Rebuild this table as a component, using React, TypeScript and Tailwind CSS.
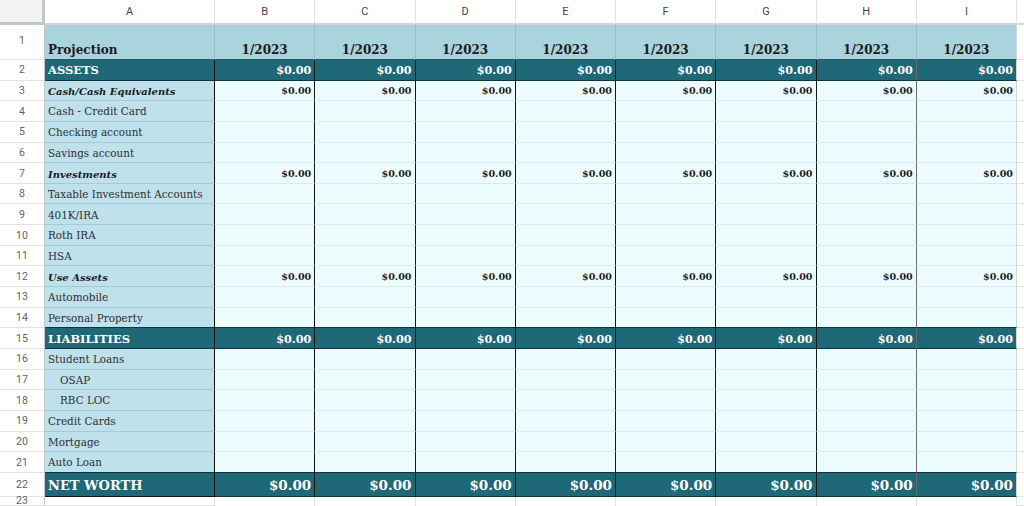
import React from 'react'

type Kind = 'head' | 'dark' | 'sub' | 'item' | 'indent' | 'total' | 'blank'

type Row = {
  n: number
  label: string
  kind: Kind
  values?: boolean
}

const rows: Row[] = [
  { n: 1, label: 'Projection', kind: 'head' },
  { n: 2, label: 'ASSETS', kind: 'dark', values: true },
  { n: 3, label: 'Cash/Cash Equivalents', kind: 'sub', values: true },
  { n: 4, label: 'Cash - Credit Card', kind: 'item' },
  { n: 5, label: 'Checking account', kind: 'item' },
  { n: 6, label: 'Savings account', kind: 'item' },
  { n: 7, label: 'Investments', kind: 'sub', values: true },
  { n: 8, label: 'Taxable Investment Accounts', kind: 'item' },
  { n: 9, label: '401K/IRA', kind: 'item' },
  { n: 10, label: 'Roth IRA', kind: 'item' },
  { n: 11, label: 'HSA', kind: 'item' },
  { n: 12, label: 'Use Assets', kind: 'sub', values: true },
  { n: 13, label: 'Automobile', kind: 'item' },
  { n: 14, label: 'Personal Property', kind: 'item' },
  { n: 15, label: 'LIABILITIES', kind: 'dark', values: true },
  { n: 16, label: 'Student Loans', kind: 'item' },
  { n: 17, label: 'OSAP', kind: 'indent' },
  { n: 18, label: 'RBC LOC', kind: 'indent' },
  { n: 19, label: 'Credit Cards', kind: 'item' },
  { n: 20, label: 'Mortgage', kind: 'item' },
  { n: 21, label: 'Auto Loan', kind: 'item' },
  { n: 22, label: 'NET WORTH', kind: 'total', values: true },
  { n: 23, label: '', kind: 'blank' },
]

const letters = ['A', 'B', 'C', 'D', 'E', 'F', 'G', 'H', 'I']

const serif = "font-['DejaVu_Serif',_'Liberation_Serif',_serif]"

function labelCell(row: Row, nextDark: boolean) {
  const bottom = nextDark || row.kind === 'dark' || row.kind === 'total' ? 'border-b-[#10343c]' : 'border-b-[#a6cad4]'
  switch (row.kind) {
    case 'head':
      return <div key="a" className={`flex items-end pl-[3px] pb-[3px] leading-none bg-[#a9d3dd] border-r border-b border-r-[#92bfca] border-b-[#2b5660] text-[12px] font-bold text-[#1c1c1c] ${serif}`}>{row.label}</div>
    case 'dark':
      return <div key="a" className={`flex items-center pl-[3px] pt-[2px] bg-[#1f6877] border-r border-b border-r-[#111] ${bottom} text-[11.5px] font-bold text-white ${serif}`}>{row.label}</div>
    case 'total':
      return <div key="a" className={`flex items-center pl-[3px] pt-[2px] bg-[#1f6877] border-r border-b border-r-[#111] border-b-[#111] text-[13px] font-bold text-white ${serif}`}>{row.label}</div>
    case 'sub':
      return <div key="a" className={`flex items-center pl-[3px] pt-[2px] bg-[#bfe1eb] border-r border-b border-r-[#111] ${bottom} text-[10px] font-bold italic text-[#1c1c1c] ${serif}`}>{row.label}</div>
    case 'indent':
      return <div key="a" className={`flex items-center pl-[15px] pt-[2px] bg-[#bfe1eb] border-r border-b border-r-[#111] ${bottom} text-[10.4px] text-[#2f2f2f] ${serif}`}>{row.label}</div>
    case 'item':
      return <div key="a" className={`flex items-center pl-[3px] pt-[2px] bg-[#bfe1eb] border-r border-b border-r-[#111] ${bottom} text-[10.4px] text-[#2f2f2f] ${serif}`}>{row.label}</div>
    default:
      return <div key="a" className="bg-white border-r border-b border-[#e2e2e2]"></div>
  }
}

function valueCell(row: Row, col: number, nextDark: boolean) {
  const right = col === 8 ? 'border-r-[#d6d6d6]' : col === 7 ? 'border-r-[#6a6a6a]' : 'border-r-[#161616]'
  const bottom = nextDark || row.kind === 'dark' || row.kind === 'total' ? 'border-b-[#10343c]' : 'border-b-[#dbe9ec]'
  if (row.kind === 'head') {
    return <div key={col} className={`flex items-end justify-center pb-[3px] leading-none bg-[#a9d3dd] border-r border-b ${col === 8 ? 'border-r-[#d6d6d6]' : 'border-r-[#92bfca]'} border-b-[#2b5660] text-[12px] font-bold text-[#1c1c1c] ${serif}`}>1/2023</div>
  }
  if (row.kind === 'blank') {
    return <div key={col} className="bg-white border-r border-[#e2e2e2]"></div>
  }
  const dark = row.kind === 'dark' || row.kind === 'total'
  const size = row.kind === 'total' ? 'text-[13.5px]' : row.kind === 'dark' ? 'text-[11.2px]' : 'text-[9.6px]'
  return (
    <div key={col} className={`flex items-center justify-end pr-[3px] pt-[2px] border-r border-b ${right} ${bottom} ${dark ? 'bg-[#1f6877] text-white' : 'bg-[#edfcff] text-[#1c1c1c]'} ${size} font-bold ${serif}`}>
      {row.values ? '$0.00' : ''}
    </div>
  )
}

export default function App() {
  return (
    <div className="w-[1024px] h-[506px] overflow-hidden bg-white">
      <div className="grid grid-cols-[45px_170px_repeat(8,100.25px)_1fr] grid-rows-[25px_35px_repeat(20,20.65px)_24px_9px]">
        <div className="bg-[#f1f3f4] border-r-[3px] border-b-[3px] border-[#c4c7c5]"></div>
        {letters.map((l) => (
          <div key={l} className="flex items-center justify-center pt-[2px] bg-white border-r border-b-2 border-r-[#e2e2e2] border-b-[#d4d4d4] text-[11px] text-[#444] font-['Roboto',_sans-serif]">{l}</div>
        ))}
        <div className="bg-white border-b-2 border-[#d4d4d4]"></div>

        {rows.map((row, i) => {
          const next = rows[i + 1]
          const nextDark = !!next && (next.kind === 'dark' || next.kind === 'total')
          return (
            <React.Fragment key={row.n}>
              <div className={`flex items-center ${row.kind === 'head' ? 'pb-[2px]' : 'pt-[1px]'} justify-center bg-white border-r border-b border-r-[#c4c7c5] border-b-[#e1e3e1] text-[10.5px] text-[#5f6368] font-['Roboto',_sans-serif]`}>{row.n}</div>
              {labelCell(row, nextDark)}
              {[1, 2, 3, 4, 5, 6, 7, 8].map((c) => valueCell(row, c, nextDark))}
              <div className="bg-white border-b border-[#e2e2e2]"></div>
            </React.Fragment>
          )
        })}
      </div>
    </div>
  )
}
